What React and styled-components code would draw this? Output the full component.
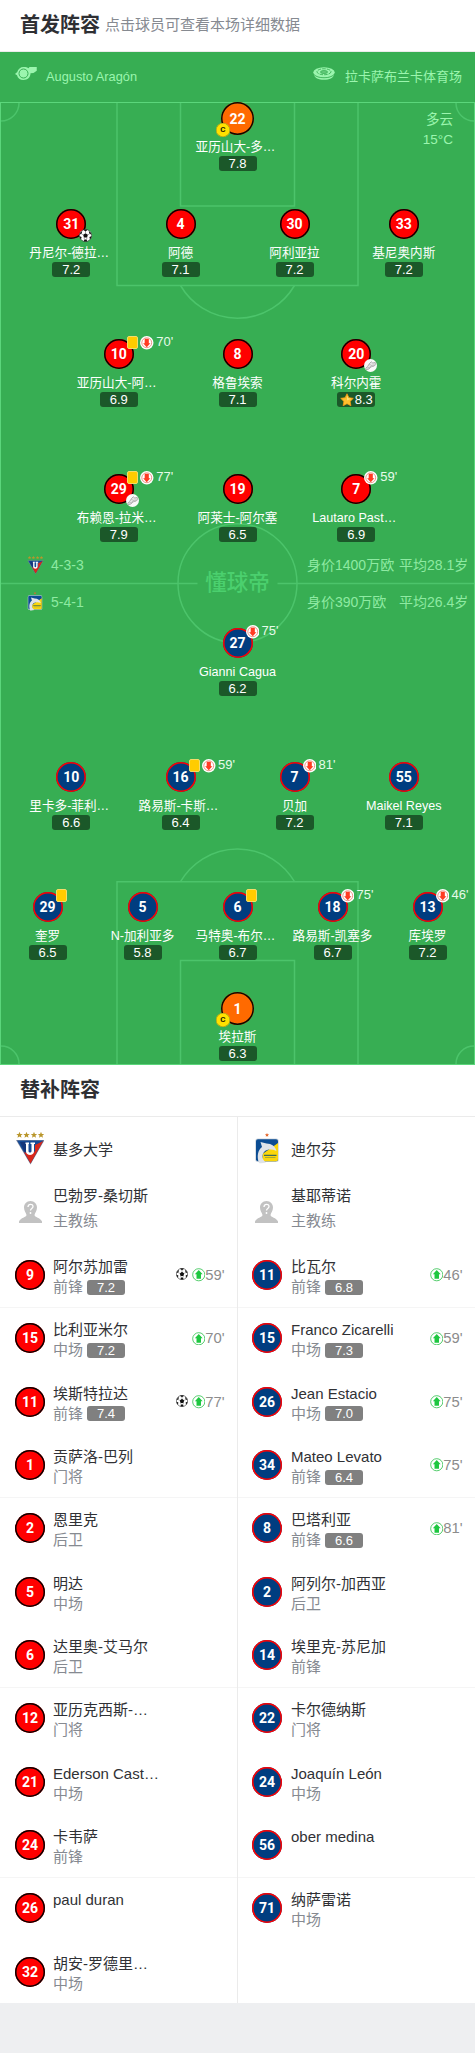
import React from 'react';
import styled, { createGlobalStyle } from 'styled-components';

const Global = createGlobalStyle`
  * { box-sizing: border-box; }
  body {
    margin: 0;
    background: #eeeff1;
    font-family: "Liberation Sans", "Noto Sans CJK SC", sans-serif;
    color: #303135;
  }
`;

const Page = styled.main`
  width: 475px;
  height: 2053px;
  overflow: hidden;
`;

const SectionHeader = styled.header`
  display: flex;
  align-items: center;
  gap: 5px;
  height: ${(p) => p.$height}px;
  padding: 0 20px 2px;
  background: #fff;
  border-bottom: 1px solid #ebebeb;
`;

const Title = styled.h2`
  margin: 0;
  font-size: 20px;
  line-height: 28px;
  font-weight: 700;
  color: #2e2f33;
`;

const Hint = styled.span`
  font-size: 15px;
  line-height: 20px;
  color: #868a91;
`;

const MatchInfo = styled.div`
  display: flex;
  justify-content: space-between;
  height: 50px;
  padding: 15px 13px 0 15px;
  background: #37ae53;
  color: #9bf5ae;
  font-size: 13px;
  line-height: 20px;
`;

const InfoItem = styled.div`
  display: flex;
  align-items: flex-start;
  gap: ${(p) => p.$gap}px;
`;

const InfoText = styled.span`
  font-size: ${(p) => p.$size}px;
`;

const Pitch = styled.section`
  position: relative;
  height: 963px;
  background: #37ae53;
`;

const FieldLines = styled.svg`
  position: absolute;
  inset: 0;
`;

const Weather = styled.div`
  position: absolute;
  top: 8px;
  right: 22px;
  text-align: right;
  color: #9bf5ae;
  font-size: 13.5px;
  line-height: 19.5px;
`;

const Watermark = styled.div`
  position: absolute;
  top: 467px;
  left: 0;
  width: 475px;
  text-align: center;
  font-size: 21.5px;
  line-height: 28px;
  font-weight: 500;
  color: #4bd06e;
`;

const Spot = styled.div`
  position: absolute;
  left: ${(p) => p.$x}%;
  top: ${(p) => p.$y}px;
  width: 110px;
  margin-left: -55px;
  display: flex;
  flex-direction: column;
  align-items: center;
`;

const kits = {
  red: ['#ff0000', '#0b0000'],
  blue: ['#003d80', '#ff0000'],
  keeper: ['#ff6a00', '#0d0800'],
};

const Shirt = styled.div`
  flex: none;
  width: ${(p) => p.$size || 30}px;
  height: ${(p) => p.$size || 30}px;
  border-radius: 50%;
  box-shadow: inset 0 0 0 1.5px ${(p) => kits[p.$kit][1]};
  background: ${(p) => kits[p.$kit][0]};
  color: #fff;
  display: flex;
  align-items: center;
  justify-content: center;
  font: 700 14px/1 Roboto, sans-serif;
`;

const PlayerName = styled.div`
  margin-top: ${(p) => (p.$keeper ? 3 : 5)}px;
  margin-left: ${(p) => (p.$cut ? -4 : 0)}px;
  font-size: 12.6px;
  line-height: 18px;
  height: 18px;
  color: #fff;
  white-space: nowrap;
`;

const Score = styled.div`
  display: flex;
  align-items: center;
  justify-content: center;
  width: 38px;
  height: 15px;
  border-radius: 3px;
  background: ${(p) => (p.$bench ? '#808080' : '#1b5829')};
  color: #fff;
  font-size: 13px;
  line-height: 15px;
`;

const Events = styled.div`
  position: absolute;
  top: -3px;
  left: calc(50% + 8px);
  display: flex;
  align-items: center;
  gap: 2.5px;
  white-space: nowrap;
`;

const Card = styled.i`
  width: 11px;
  height: 13px;
  border-radius: 2px;
  background: #ffcc00;
  border: 1px solid #f4dc6a;
`;

const Minute = styled.span`
  font-size: 13px;
  line-height: 12px;
  color: #e6fbea;
  padding-bottom: 1px;
`;

const Corner = styled.div`
  position: absolute;
  top: 20px;
  left: calc(50% + 7.5px);
  display: flex;
`;

const Captain = styled.div`
  position: absolute;
  left: 33.5px;
  top: 21px;
  width: 13.5px;
  height: 13.5px;
  border-radius: 50%;
  box-shadow: inset 0 0 0 0.6px #9d9a20;
  background: #ffe100;
  color: #1c1a00;
  font: 700 8px/14px Roboto, sans-serif;
  text-align: center;
`;

const Formations = styled.div`
  position: absolute;
  top: 444px;
  left: 0;
  width: 475px;
  color: #8eeaa2;
  font-size: 14px;
`;

const FormationRow = styled.div`
  display: grid;
  grid-template-columns: 17px 263.5px 92px 1fr;
  align-items: center;
  height: 37px;
  padding-left: 26.5px;
  white-space: nowrap;
  line-height: 20px;
`;

const FormationName = styled.span`
  padding-left: 7.5px;
`;

const Bench = styled.section`
  display: grid;
  grid-template-columns: 237px 238px;
  height: 886px;
  overflow: hidden;
  background: #fff;
`;

const BenchColumn = styled.div`
  ${(p) => p.$away && 'border-left: 1px solid #ebebeb;'}
`;

const BenchRow = styled.div`
  display: flex;
  height: 63.333px;
  padding: ${(p) => p.$top || 16.5}px 12.5px 0 ${(p) => (p.$away ? 14 : 15)}px;
  ${(p) => p.$line && 'box-shadow: inset 0 1px #f5f5f5;'}
`;

const BenchIcon = styled.div`
  width: 30px;
  display: flex;
  justify-content: ${(p) => (p.$away ? 'flex-start' : 'center')};
  padding: ${(p) => p.$pad || '0'};
`;

const BenchText = styled.div`
  flex: 1;
  margin: ${(p) => p.$shift || -4}px 0 0 ${(p) => (p.$away ? 9 : 8)}px;
  white-space: nowrap;
`;

const BenchName = styled.div`
  height: 21px;
  line-height: 21px;
  font-size: 15px;
  color: #303135;
`;

const BenchRole = styled.div`
  display: flex;
  align-items: center;
  gap: 4px;
  height: 20px;
  margin-top: ${(p) => p.$space || 0}px;
  font-size: 15px;
  line-height: 20px;
  color: #868a91;
`;

const SubIn = styled.div`
  display: flex;
  align-items: center;
  height: 30px;
  font-size: 14.8px;
  color: #8c8c8c;
`;

const BallSlot = styled.span`
  display: flex;
  margin-right: 3.5px;
  padding-bottom: 2px;
`;

const ArrowBadge = ({ up }) => (
  <svg width="13.5" height="13.5" viewBox="0 0 26 26">
    <circle cx="13" cy="13" r="13" fill="#fff" />
    <circle cx="13" cy="13" r={up ? 11.7 : 9.5} fill="none" stroke={up ? '#27bf45' : '#e8796a'} strokeWidth="1.5" />
    <path
      d={up ? 'M13 4 L20.5 12 H17.3 V20.5 H8.7 V12 H5.5 Z' : 'M13 21.500 L6 14 H9 V5.500 H17 V14 H20 Z'}
      fill={up ? '#1ec740' : '#ff3b22'}
    />
  </svg>
);

const Ball = ({ size = 13 }) => (
  <svg width={size} height={size} viewBox="0 0 26 26">
    <circle cx="13" cy="13" r="12.2" fill="#fff" stroke="#444" strokeWidth="1.4" />
    <path d="M13 8.3l4.8 3.4-1.8 5.5h-6l-1.8-5.5z" fill="#111" />
    <path d="M8.5 1.7L13 4.8l4.5-3.1a12 12 0 0 0-9 0zM1.2 11l4-1.5L6.500 4a12 12 0 0 0-5.300 7zM24.800 11l-4-1.500L19.500 4a12 12 0 0 1 5.300 7zM4 21l1.200-5L1 14.500A12 12 0 0 0 4 21zM22 21l-1.200-5 4.200-1.500A12 12 0 0 1 22 21zM9.500 24.500L11 20.800h4l1.500 3.700a12 12 0 0 1-7 0z" fill="#111" />
    <path d="M13 8V4M18 11.500l3-1.500M16 17l-1 4M10 17l1 4M8 11.500l-3-1.500" stroke="#555" strokeWidth="1" />
  </svg>
);

const Boot = () => (
  <svg width="13" height="13" viewBox="0 0 26 26">
    <circle cx="13" cy="13" r="13" fill="#fafafa" />
    <path d="M3.500 18.500C6 15 9 14 10.500 9.500l4-4 3 2.500 5-1c1 3 0 5.500-2 7-3 1.500-5 .5-7 2.500-2 2-5 5.500-9 4.500z" fill="#e4e4e4" stroke="#8b8b8b" strokeWidth="1.300" />
    <path d="M11 10l3 3M6 18l5-1 4-4 6-1" stroke="#999" fill="none" />
  </svg>
);

const Star = () => (
  <svg width="14" height="14" viewBox="0 0 28 28">
    <path
      d="M14 1.500l3.900 7.900 8.700 1.300-6.300 6.100 1.500 8.700-7.800-4.100-7.800 4.100 1.500-8.700L1.400 10.700l8.700-1.300z"
      fill="#ffc02e"
      stroke="#f79a13"
      strokeWidth="1.500"
      strokeLinejoin="round"
    />
    <path d="M14 5l2.600 5.600 5.500.8L14 15z" fill="#ffe074" />
  </svg>
);

const Whistle = () => (
  <svg width="22" height="13" viewBox="0 0 44 26" fill="#9bf5ae">
    <path d="M17 0c5 0 8 .8 10 2.400L29 0h14.500v7.500L37 12l-6 .5c0 8-6 13.500-14 13.500C10 26 5.500 22 4 16.500L0 14l4.500-4C6 4 11 0 17 0z" />
    <circle cx="17" cy="13" r="9" fill="none" stroke="#37ae53" strokeWidth="2" />
  </svg>
);

const Stadium = () => (
  <svg width="22" height="13" viewBox="0 0 44 26">
    <ellipse cx="22" cy="11" rx="21.500" ry="10.500" fill="#9bf5ae" />
    <path d="M2 15c6 9 34 9 40 0-1 7-9 10.500-20 10.500S3 22 2 15z" fill="#9bf5ae" />
    <path d="M1 14c7 10 35 10 42 0" fill="none" stroke="#37ae53" strokeWidth="1.500" />
    <ellipse cx="22" cy="9.500" rx="14" ry="6" fill="none" stroke="#37ae53" strokeWidth="1.700" strokeDasharray="7 2" />
    <ellipse cx="22" cy="10" rx="7" ry="3" fill="#63c97a" stroke="#37ae53" strokeWidth="1.500" />
  </svg>
);

const starPath = 'M0-3.200L.9-1 3.200-.9 1.400.6 2 2.800 0 1.500-2 2.800-1.400.6-3.200-.9-.9-1z';

const LigaCrest = ({ width, height }) => (
  <svg width={width} height={height} viewBox="0 0 57 65">
    {[7, 21, 36, 50].map((x) => (
      <path key={x} d={starPath} transform={`translate(${x} 6) scale(2)`} fill="#b9962b" />
    ))}
    <path d="M0 16h57L29 65z" fill="#8b8fa0" />
    <path d="M2 17h53L29 63z" fill="#154a96" />
    <path d="M8 20h14v20l-4 2z" fill="#14367a" />
    <path d="M54.500 18L29 63 16 40c8 4 18 4 22-2V26z" fill="#d8281c" />
    <path d="M19 21h7v3h-1v14c0 4 6 4 6 0V24h-2v-3h9v3h-2v15c0 9-16 9-16 0V24h-1z" fill="#fff" />
  </svg>
);

const DelfinCrest = ({ width, height }) => (
  <svg width={width} height={height} viewBox="0 0 48 62">
    <path d={starPath} transform="translate(24 4) scale(1.300)" fill="#e4672c" />
    <rect x=".5" y="11" width="47" height="47" rx="5" fill="#cfd6dd" />
    <rect x="2" y="12.500" width="44" height="44" rx="4" fill="#0b4c93" />
    <path d="M46 20v32.500q0 4-4 4H15V42l17-12z" fill="#fbd60b" />
    <path d="M8 60c-5-14-2-26 6-32l-3-10 12 3c10 0 18 6 20 15-9-4-18-4-24 1-6 6-6 15 3 22-5 1-10 2-14 1z" fill="#dfe3e8" />
    <ellipse cx="30" cy="46" rx="14" ry="9.500" fill="#fbd60b" />
    <rect x="18" y="43.500" width="25" height="2.500" fill="#3c6b58" />
    <rect x="20" y="48" width="21" height="1.500" fill="#8b9b45" />
  </svg>
);

const CoachAvatar = () => (
  <svg width="23" height="22" viewBox="0 0 46 44">
    <path d="M23 0c8 0 13 6 13 13 0 7-4 10-5 15 0 5 12 5 15 13v3H0v-3c3-8 15-8 15-13-1-5-5-8-5-15C10 6 15 0 23 0z" fill="#c2c2c2" />
    <path d="M18 12c0-7 10-7 10-1 0 4-5 4-5 8" fill="none" stroke="#fff" strokeWidth="2.600" />
    <circle cx="23" cy="24" r="1.800" fill="#fff" />
  </svg>
);

const lineup = [
  { x: 50, y: 0, kit: 'keeper', no: 22, name: '亚历山大-多…', score: '7.8', captain: true },
  { x: 15, y: 107, kit: 'red', no: 31, name: '丹尼尔-德拉…', score: '7.2', corner: 'ball' },
  { x: 38, y: 107, kit: 'red', no: 4, name: '阿德', score: '7.1' },
  { x: 62, y: 107, kit: 'red', no: 30, name: '阿利亚拉', score: '7.2' },
  { x: 85, y: 107, kit: 'red', no: 33, name: '基尼奥内斯', score: '7.2' },
  { x: 25, y: 237, kit: 'red', no: 10, name: '亚历山大-阿…', score: '6.9', card: true, off: 70 },
  { x: 50, y: 237, kit: 'red', no: 8, name: '格鲁埃索', score: '7.1' },
  { x: 75, y: 237, kit: 'red', no: 20, name: '科尔内霍', score: '8.3', corner: 'boot', best: true },
  { x: 25, y: 372, kit: 'red', no: 29, name: '布赖恩-拉米…', score: '7.9', card: true, off: 77, corner: 'boot' },
  { x: 50, y: 372, kit: 'red', no: 19, name: '阿莱士-阿尔塞', score: '6.5' },
  { x: 75, y: 372, kit: 'red', no: 7, name: 'Lautaro Past…', score: '6.9', off: 59 },
  { x: 50, y: 526, kit: 'blue', no: 27, name: 'Gianni Cagua', score: '6.2', off: 75 },
  { x: 15, y: 660, kit: 'blue', no: 10, name: '里卡多-菲利…', score: '6.6' },
  { x: 38, y: 660, kit: 'blue', no: 16, name: '路易斯-卡斯…', score: '6.4', card: true, off: 59 },
  { x: 62, y: 660, kit: 'blue', no: 7, name: '贝加', score: '7.2', off: 81 },
  { x: 85, y: 660, kit: 'blue', no: 55, name: 'Maikel Reyes', score: '7.1' },
  { x: 10, y: 790, kit: 'blue', no: 29, name: '奎罗', score: '6.5', card: true },
  { x: 30, y: 790, kit: 'blue', no: 5, name: 'N-加利亚多', score: '5.8' },
  { x: 50, y: 790, kit: 'blue', no: 6, name: '马特奥-布尔…', score: '6.7', card: true },
  { x: 70, y: 790, kit: 'blue', no: 18, name: '路易斯-凯塞多', score: '6.7', off: 75 },
  { x: 90, y: 790, kit: 'blue', no: 13, name: '库埃罗', score: '7.2', off: 46 },
  { x: 50, y: 890, kit: 'keeper', no: 1, name: '埃拉斯', score: '6.3', captain: true },
];

const homeBench = [
  [9, '阿尔苏加雷', '前锋', '7.2', 59, true],
  [15, '比利亚米尔', '中场', '7.2', 70],
  [11, '埃斯特拉达', '前锋', '7.4', 77, true],
  [1, '贡萨洛-巴列', '门将'],
  [2, '恩里克', '后卫'],
  [5, '明达', '中场'],
  [6, '达里奥-艾马尔', '后卫'],
  [12, '亚历克西斯-…', '门将'],
  [21, 'Ederson Cast…', '中场'],
  [24, '卡韦萨', '前锋'],
  [26, 'paul duran', ''],
  [32, '胡安-罗德里…', '中场'],
];

const awayBench = [
  [11, '比瓦尔', '前锋', '6.8', 46],
  [15, 'Franco Zicarelli', '中场', '7.3', 59],
  [26, 'Jean Estacio', '中场', '7.0', 75],
  [34, 'Mateo Levato', '前锋', '6.4', 75],
  [8, '巴塔利亚', '前锋', '6.6', 81],
  [2, '阿列尔-加西亚', '后卫'],
  [14, '埃里克-苏尼加', '前锋'],
  [22, '卡尔德纳斯', '门将'],
  [24, 'Joaquín León', '中场'],
  [56, 'ober medina', ''],
  [71, '纳萨雷诺', '中场'],
];

function Player({ p }) {
  const keeper = p.kit === 'keeper';
  return (
    <Spot $x={p.x} $y={p.y}>
      <Shirt $kit={p.kit} $size={keeper ? 33 : 30}>{p.no}</Shirt>
      {p.captain && <Captain>C</Captain>}
      {(p.card || p.off) && (
        <Events>
          {p.card && <Card />}
          {p.off && <ArrowBadge />}
          {p.off && <Minute>{p.off}'</Minute>}
        </Events>
      )}
      {p.corner && <Corner>{p.corner === 'ball' ? <Ball /> : <Boot />}</Corner>}
      <PlayerName $keeper={keeper} $cut={p.name.endsWith('…')}>{p.name}</PlayerName>
      <Score>
        {p.best && <Star />}
        {p.best ? <span>&#8202;{p.score}</span> : p.score}
      </Score>
    </Spot>
  );
}

function Substitutes({ team, crest, coach, players, away }) {
  return (
    <BenchColumn $away={away}>
      <BenchRow $away={away} $top={15}>
        <BenchIcon $away={away} $pad={away ? '1px 0 0 3px' : '0'}>{crest}</BenchIcon>
        <BenchText $away={away} $shift={7}><BenchName>{team}</BenchName></BenchText>
      </BenchRow>
      <BenchRow $away={away} $top={20.5}>
        <BenchIcon $away={away} $pad={away ? '0 0 0 3px' : '0'}><CoachAvatar /></BenchIcon>
        <BenchText $away={away} $shift={-15.5}>
          <BenchName>{coach}</BenchName>
          <BenchRole $space={5}>主教练</BenchRole>
        </BenchText>
      </BenchRow>
      {players.map(([no, name, role, score, minute, goal], i) => (
        <BenchRow key={no} $away={away} $line={i % 3 === 1}>
          <Shirt $kit={away ? 'blue' : 'red'}>{no}</Shirt>
          <BenchText $away={away}>
            <BenchName>{name}</BenchName>
            <BenchRole>{role}{score && <Score $bench>{score}</Score>}</BenchRole>
          </BenchText>
          {minute && (
            <SubIn>
              {goal && <BallSlot><Ball size={12} /></BallSlot>}
              <ArrowBadge up />
              {minute}'
            </SubIn>
          )}
        </BenchRow>
      ))}
    </BenchColumn>
  );
}

export default function App() {
  return (
    <Page>
      <Global />
      <SectionHeader $height={52}>
        <Title>首发阵容</Title>
        <Hint>点击球员可查看本场详细数据</Hint>
      </SectionHeader>
      <MatchInfo>
        <InfoItem $gap={9}>
          <Whistle />
          <InfoText $size={12.8}>Augusto Aragón</InfoText>
        </InfoItem>
        <InfoItem $gap={10}>
          <Stadium />
          <InfoText $size={13}>拉卡萨布兰卡体育场</InfoText>
        </InfoItem>
      </MatchInfo>
      <Pitch>
        <FieldLines width="475" height="963" viewBox="0 0 475 963" fill="none">
          <g stroke="#4cc46b" strokeWidth="1.5">
            <path d="M117 1V183.500H358V1M180.500 1V104H294.500V1" />
            <path d="M180.500 183.500A66 66 0 0 0 294.500 183.500" />
            <path d="M117 962V779.700H358V962M180.500 962V858.500H294.500V962" />
            <path d="M180.500 779.700A66 66 0 0 1 294.500 779.700" />
            <circle cx="237.500" cy="481.300" r="59.500" />
            <path d="M1 481.500H197.500M277.500 481.500H474" />
            <path d="M19 1A18 18 0 0 1 1 19M456 1A18 18 0 0 0 474 19M1 944A18 18 0 0 1 19 962M474 944A18 18 0 0 0 456 962" />
          </g>
          <rect x=".5" y=".5" width="474" height="962" stroke="#5bd67b" />
        </FieldLines>
        <Weather>
          <div>多云</div>
          <div>15°C</div>
        </Weather>
        <Watermark>懂球帝</Watermark>
        <Formations>
          <FormationRow>
            <LigaCrest width={17} height={18} />
            <FormationName>4-3-3</FormationName>
            <span>身价1400万欧</span>
            <span>平均28.1岁</span>
          </FormationRow>
          <FormationRow>
            <DelfinCrest width={16} height={19} />
            <FormationName>5-4-1</FormationName>
            <span>身价390万欧</span>
            <span>平均26.4岁</span>
          </FormationRow>
        </Formations>
        {lineup.map((p) => <Player key={`${p.x}-${p.y}`} p={p} />)}
      </Pitch>
      <SectionHeader $height={52}>
        <Title>替补阵容</Title>
      </SectionHeader>
      <Bench>
        <Substitutes team="基多大学" coach="巴勃罗-桑切斯" players={homeBench} crest={<LigaCrest width={28.5} height={32.5} />} />
        <Substitutes away team="迪尔芬" coach="基耶蒂诺" players={awayBench} crest={<DelfinCrest width={24} height={31} />} />
      </Bench>
    </Page>
  );
}
